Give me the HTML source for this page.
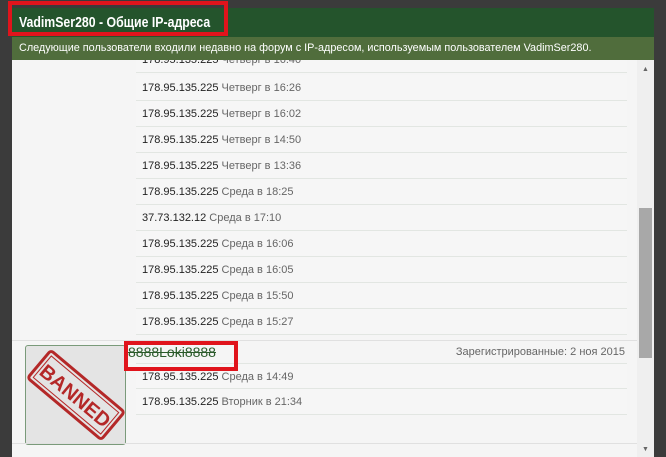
<!DOCTYPE html>
<html><head><meta charset="utf-8"><style>
body{margin:0;width:666px;height:457px;background:#3b3b3b;overflow:hidden;font-family:"Liberation Sans",sans-serif;position:relative}
.dlg{position:absolute;left:12px;top:8px;width:642px;height:449px;background:#f5f5f5;overflow:hidden}
.h1{position:absolute;left:0;top:0;width:642px;height:29px;background:#24542c;color:#fff;font-weight:bold;font-size:15px;line-height:29px;padding-left:7px;box-sizing:border-box}
.h1 span{display:inline-block;transform:scaleX(0.82);transform-origin:left center}
.h2{position:absolute;left:0;top:29px;width:642px;height:23px;background:#506d3c;color:#fff;font-size:11px;line-height:23px;padding-left:7px;box-sizing:border-box}
.h2 span{display:inline-block;transform:scaleX(0.985);transform-origin:left center}
.redbox{position:absolute;border:4px solid #e0141c;box-sizing:border-box}
.row{position:absolute;left:124px;width:491px;height:26px;border-bottom:1px solid #e2e6e2;font-size:11px;line-height:26px;color:#222;padding-left:6px;box-sizing:border-box;background:#f6f6f6}
.row span{color:#666}
.track{position:absolute;left:625px;top:52px;width:17px;height:397px;background:#efefef}
.thumb{position:absolute;left:627px;top:200px;width:13px;height:150px;background:#a8a8a8}
</style></head><body>
<div class="dlg">
<div class="h1"><span>VadimSer280 - Общие IP-адреса</span></div>
<div class="h2"><span>Следующие пользователи входили недавно на форум с IP-адресом, используемым пользователем VadimSer280.</span></div>
<div style="position:absolute;left:124px;top:52px;width:491px;height:15px;overflow:hidden"><div class="row" style="left:0;top:-13px">178.95.135.225 <span>Четверг в 16:40</span></div></div>
<div class="row" style="top:67px">178.95.135.225 <span>Четверг в 16:26</span></div>
<div class="row" style="top:93px">178.95.135.225 <span>Четверг в 16:02</span></div>
<div class="row" style="top:119px">178.95.135.225 <span>Четверг в 14:50</span></div>
<div class="row" style="top:145px">178.95.135.225 <span>Четверг в 13:36</span></div>
<div class="row" style="top:171px">178.95.135.225 <span>Среда в 18:25</span></div>
<div class="row" style="top:197px">37.73.132.12 <span>Среда в 17:10</span></div>
<div class="row" style="top:223px">178.95.135.225 <span>Среда в 16:06</span></div>
<div class="row" style="top:249px">178.95.135.225 <span>Среда в 16:05</span></div>
<div class="row" style="top:275px">178.95.135.225 <span>Среда в 15:50</span></div>
<div class="row" style="top:301px">178.95.135.225 <span>Среда в 15:27</span></div>
<div style="position:absolute;left:0;top:332px;width:625px;border-top:1px solid #e0e0e0"></div>
<div style="position:absolute;left:13px;top:337px;width:101px;height:100px;background:#e4e4e4;border:1px solid #7a9a7a;border-radius:3px;box-sizing:border-box;overflow:hidden">
<svg width="99" height="98" viewBox="0 0 99 98"><g transform="rotate(40 50 49)"><rect x="2" y="31" width="96" height="36" fill="none" stroke="#b42828" stroke-width="3" rx="3"/><rect x="6" y="35" width="88" height="28" fill="none" stroke="#b42828" stroke-width="1"/><text x="50" y="57" font-size="20" font-weight="bold" fill="#b42828" text-anchor="middle" font-family="Liberation Sans">BANNED</text></g></svg></div>
<div style="position:absolute;left:116px;top:336px;font-size:14px;color:#2a5a2a;text-decoration:line-through">8888Loki8888</div>
<div style="position:absolute;right:29px;top:338px;font-size:11px;color:#666">Зарегистрированные: 2 ноя 2015</div>
<div class="row" style="top:355px;border-top:1px solid #e2e6e2">178.95.135.225 <span>Среда в 14:49</span></div>
<div class="row" style="top:381px">178.95.135.225 <span>Вторник в 21:34</span></div>
<div style="position:absolute;left:0;top:435px;width:625px;border-top:1px solid #e0e0e0"></div>
<div class="track"></div><div class="thumb"></div>
<div style="position:absolute;left:630px;top:58px;font-size:7px;color:#666">▲</div>
<div style="position:absolute;left:630px;top:438px;font-size:7px;color:#666">▼</div>
</div>
<div class="redbox" style="left:8px;top:1px;width:220px;height:35px"></div>
<div class="redbox" style="left:124px;top:341px;width:114px;height:30px"></div>
</body></html>
